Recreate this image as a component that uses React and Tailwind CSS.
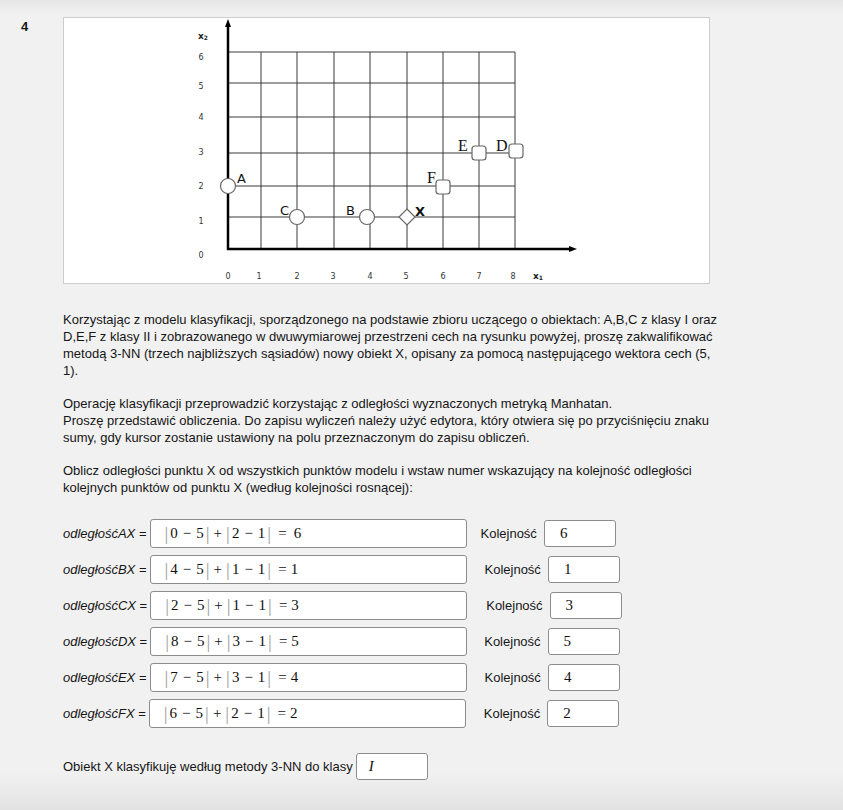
import React from 'react';

const rows = [
  { p: 'A', a: '0', b: '2', res: '6', resMl: 'ml-[7px]', kol: '6', kolMl: 'ml-[14px]' },
  { p: 'B', a: '4', b: '1', res: '1', resMl: 'ml-[4px]', kol: '1', kolMl: 'ml-[18px]' },
  { p: 'C', a: '2', b: '1', res: '3', resMl: 'ml-[4px]', kol: '3', kolMl: 'ml-[19px]' },
  { p: 'D', a: '8', b: '3', res: '5', resMl: 'ml-[4px]', kol: '5', kolMl: 'ml-[17px]' },
  { p: 'E', a: '7', b: '3', res: '4', resMl: 'ml-[4px]', kol: '4', kolMl: 'ml-[18px]' },
  { p: 'F', a: '6', b: '2', res: '2', resMl: 'ml-[4px]', kol: '2', kolMl: 'ml-[18px]' },
];

const gx = [228, 261, 297, 334, 370, 407, 443, 479, 515];
const gy = [52, 83, 117, 153, 186, 217, 249];

function Bar() {
  return <span className="text-[19px] text-[#a0a0a0] font-light">|</span>;
}

function Diff({ a, b }) {
  return (
    <span className="mx-[2px] flex items-center">
      <span>{a}</span>
      <span className="mx-[5px]">−</span>
      <span>{b}</span>
    </span>
  );
}

function Chart() {
  const axisFont = { fontFamily: 'DejaVu Sans, Verdana, sans-serif' };
  return (
    <svg width="645" height="265" viewBox="64 18 645 265" className="block">
      {gx.map((x) => (
        <line key={'v' + x} x1={x} y1={52} x2={x} y2={249} stroke="#3a3a3a" strokeWidth="1" />
      ))}
      {gy.map((y) => (
        <line key={'h' + y} x1={228} y1={y} x2={515} y2={y} stroke="#3a3a3a" strokeWidth="1" />
      ))}
      {/* axes */}
      <line x1="228" y1="250" x2="228" y2="26" stroke="#000" strokeWidth="2.5" />
      <polygon points="228,19 225,27 231,27" fill="#000" />
      <line x1="227" y1="249" x2="571" y2="249" stroke="#000" strokeWidth="2.5" />
      <polygon points="577,249 569,246 569,252" fill="#000" />

      {/* labels */}
      <g fontSize="8" fill="#333" textAnchor="middle" style={axisFont}>
        {['6', '5', '4', '3', '2', '1', '0'].map((t, i) => (
          <text key={'y' + t} x="201" y={[60, 89, 120, 155, 189, 224, 258][i]}>{t}</text>
        ))}
        {['0', '1', '2', '3', '4', '5', '6', '7', '8'].map((t, i) => (
          <text key={'x' + t} x={[228, 259, 297, 333, 370, 406, 443, 479, 513][i]} y="279">{t}</text>
        ))}
      </g>
      <text x="198" y="39" fontSize="9" fontWeight="bold" fill="#222" style={axisFont}>
        x<tspan fontSize="6" dy="1">2</tspan>
      </text>
      <text x="533" y="279" fontSize="9" fontWeight="bold" fill="#222" style={axisFont}>
        x<tspan fontSize="6" dy="1">1</tspan>
      </text>

      {/* points */}
      <g fill="#fff" stroke="#666" strokeWidth="1.2">
        <circle cx="228" cy="186" r="7.5" />
        <circle cx="297" cy="217" r="7.5" />
        <circle cx="367" cy="217" r="7.5" />
        <polygon points="407,209 415,217 407,225 399,217" />
        <rect x="436" y="180" width="14" height="14" rx="3" />
        <rect x="472" y="146" width="14" height="14" rx="3" />
        <rect x="509" y="144" width="14" height="14" rx="3" />
      </g>
      <g fontSize="13" fill="#111" style={axisFont}>
        <text x="237" y="183">A</text>
        <text x="280" y="215">C</text>
        <text x="346" y="215">B</text>
        <text x="415" y="216" fontWeight="bold">X</text>
      </g>
      <g fontSize="16" fill="#111" style={{ fontFamily: 'Liberation Serif, serif' }}>
        <text x="427" y="183">F</text>
        <text x="458" y="151">E</text>
        <text x="496" y="151">D</text>
      </g>
    </svg>
  );
}

export default function App() {
  return (
    <div
      className="h-[810px] w-[843px] bg-[linear-gradient(to_bottom,#e6e6e6_0px,#f1f1f1_14px,#f1f1f1_772px,#e2e2e2_810px)] text-[13px] leading-[17px] text-[#161616]"
      style={{ fontFamily: '"Liberation Sans", Arial, sans-serif' }}
    >
      <div className="flex">
        <div className="w-[63px] pl-[21px] pt-[18px] font-bold text-[13px]">4</div>

        <div className="pt-[17px]">
          {/* figure */}
          <div className="w-[647px] h-[267px] bg-white border border-[#cdcdcd]">
            <Chart />
          </div>

          <p className="mt-[27px]">
            Korzystając z modelu klasyfikacji, sporządzonego na podstawie zbioru uczącego o obiektach: A,B,C z klasy I oraz<br />
            D,E,F z klasy II i zobrazowanego w dwuwymiarowej przestrzeni cech na rysunku powyżej, proszę zakwalifikować<br />
            metodą 3-NN (trzech najbliższych sąsiadów) nowy obiekt X, opisany za pomocą następującego wektora cech (5,<br />
            1).
          </p>

          <p className="mt-4">
            Operację klasyfikacji przeprowadzić korzystając z odległości wyznaczonych metryką Manhatan.<br />
            Proszę przedstawić obliczenia. Do zapisu wyliczeń należy użyć edytora, który otwiera się po przyciśnięciu znaku<br />
            sumy, gdy kursor zostanie ustawiony na polu przeznaczonym do zapisu obliczeń.
          </p>

          <p className="mt-4">
            Oblicz odległości punktu X od wszystkich punktów modelu i wstaw numer wskazujący na kolejność odległości<br />
            kolejnych punktów od punktu X (według kolejności rosnącej):
          </p>

          {/* distance rows */}
          <div className="mt-[23px] flex flex-col gap-[7px]">
            {rows.map((r) => (
              <div key={r.p} className="flex items-center">
                <span>
                  <i>odległość{r.p}X</i> =
                </span>
                <div
                  className="ml-[3px] w-[317px] h-[29px] bg-white border border-[#8c8c8c] rounded-[3px] flex items-center pl-[14px] text-[15px] text-[#111]"
                  style={{ fontFamily: '"Liberation Serif", "Times New Roman", serif' }}
                >
                  <Bar />
                  <Diff a={r.a} b="5" />
                  <Bar />
                  <span className="mx-[4px]">+</span>
                  <Bar />
                  <Diff a={r.b} b="1" />
                  <Bar />
                  <span className="ml-[7px]">=</span>
                  <span className={r.resMl}>{r.res}</span>
                </div>
                <span className={r.kolMl}>Kolejność</span>
                <div
                  className="ml-[7px] w-[72px] h-[27px] bg-white border border-[#8c8c8c] rounded-[3px] flex items-center pl-[15px] text-[15px] text-[#111]"
                  style={{ fontFamily: '"Liberation Serif", "Times New Roman", serif' }}
                >
                  {r.kol}
                </div>
              </div>
            ))}
          </div>

          <div className="mt-[25px] flex items-center">
            <span>Obiekt X klasyfikuję według metody 3-NN do klasy</span>
            <div
              className="ml-[3px] w-[72px] h-[27px] bg-white border border-[#8c8c8c] rounded-[3px] flex items-center pl-[12px] text-[15px] italic text-[#111]"
              style={{ fontFamily: '"Liberation Serif", "Times New Roman", serif' }}
            >
              I
            </div>
          </div>
        </div>
      </div>
    </div>
  );
}
